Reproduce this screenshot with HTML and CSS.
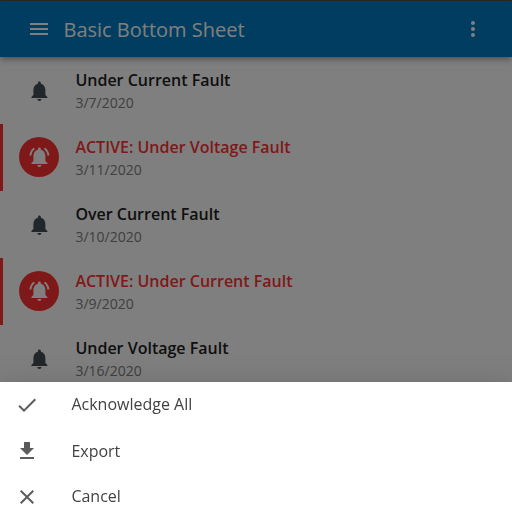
FILE: index.html
```
<!DOCTYPE html>
<html lang="en">
<head>
<meta charset="utf-8">
<title>Basic Bottom Sheet</title>
<link rel="stylesheet" href="styles.css">
</head>
<body>
<svg width="0" height="0" class="defs">
  <symbol id="bell" viewBox="0 0 24 24"><path d="M12 22c1.1 0 2-.9 2-2h-4c0 1.100.9 2 2 2zm6-6v-5c0-3.070-1.640-5.640-4.500-6.320V4c0-.83-.67-1.500-1.500-1.500s-1.500.67-1.500 1.500v.68C7.630 5.360 6 7.920 6 11v5l-2 2v1h16v-1l-2-2z"/></symbol>
  <symbol id="bell-active" viewBox="0 0 24 24"><path d="M7.580 4.080L6.150 2.650C3.750 4.480 2.170 7.300 2.030 10.500h2c.15-2.650 1.510-4.970 3.550-6.420zm12.390 6.420h2c-.15-3.200-1.730-6.020-4.120-7.850l-1.420 1.430c2.020 1.450 3.390 3.770 3.540 6.420zM18 11c0-3.070-1.640-5.640-4.500-6.320V4c0-.83-.67-1.500-1.500-1.500s-1.500.67-1.500 1.500v.68C7.630 5.360 6 7.920 6 11v5l-2 2v1h16v-1l-2-2v-5zm-6 11c.14 0 .27-.01.4-.04.65-.14 1.180-.58 1.440-1.180.1-.24.15-.5.15-.78h-4c.01 1.100.9 2 2.010 2z"/></symbol>
</svg>
<div class="app">
  <header class="bar">
    <svg class="icon" viewBox="0 0 24 24"><path d="M3 18h18v-2H3v2zm0-5h18v-2H3v2zm0-7v2h18V6H3z"/></svg>
    <h1 class="bar-title">Basic Bottom Sheet</h1>
    <svg class="icon" viewBox="0 0 24 24"><path d="M12 8c1.100 0 2-.9 2-2s-.9-2-2-2-2 .9-2 2 .9 2 2 2zm0 2c-1.100 0-2 .9-2 2s.9 2 2 2 2-.9 2-2-.9-2-2-2zm0 6c-1.100 0-2 .9-2 2s.9 2 2 2 2-.9 2-2-.9-2-2-2z"/></svg>
  </header>
  <main class="list">
    <div class="row"><span class="avatar"><svg class="icon"><use href="#bell"/></svg></span><div><div class="name">Under Current Fault</div><div class="date">3/7/2020</div></div></div>
    <div class="row active"><span class="avatar"><svg class="icon"><use href="#bell-active"/></svg></span><div><div class="name">ACTIVE: Under Voltage Fault</div><div class="date">3/11/2020</div></div></div>
    <div class="row"><span class="avatar"><svg class="icon"><use href="#bell"/></svg></span><div><div class="name">Over Current Fault</div><div class="date">3/10/2020</div></div></div>
    <div class="row active"><span class="avatar"><svg class="icon"><use href="#bell-active"/></svg></span><div><div class="name">ACTIVE: Under Current Fault</div><div class="date">3/9/2020</div></div></div>
    <div class="row"><span class="avatar"><svg class="icon"><use href="#bell"/></svg></span><div><div class="name">Under Voltage Fault</div><div class="date">3/16/2020</div></div></div>
  </main>
</div>
<div class="backdrop"></div>
<div class="sheet">
  <div class="action"><svg class="icon" viewBox="0 0 24 24"><path d="M9 16.170L4.830 12l-1.420 1.410L9 19 21 7l-1.410-1.410z"/></svg><span>Acknowledge All</span></div>
  <div class="action"><svg class="icon" viewBox="0 0 24 24"><path d="M19 9h-4V3H9v6H5l7 7 7-7zM5 18v2h14v-2H5z"/></svg><span>Export</span></div>
  <div class="action"><svg class="icon" viewBox="0 0 24 24"><path d="M19 6.410L17.590 5 12 10.590 6.410 5 5 6.410 10.590 12 5 17.590 6.410 19 12 13.410 17.590 19 19 17.590 13.410 12z"/></svg><span>Cancel</span></div>
</div>
</body>
</html>
```
FILE: styles.css
```
* { box-sizing: border-box; }
body {
  margin: 0;
  height: 516px;
  overflow: hidden;
  background: #fff;
  font-family: "Open Sans", sans-serif;
}
.defs { position: absolute; }
.icon {
  display: block;
  flex: none;
  width: 24px;
  height: 24px;
  fill: currentColor;
}
.app { border-top: 1px solid #555; }
.bar {
  position: relative;
  display: flex;
  align-items: center;
  height: 56px;
  padding: 0 27.300px;
  background: #007bc1;
  color: #fff;
  box-shadow: 0 2px 4px -1px rgba(0,0,0,.2), 0 4px 5px rgba(0,0,0,.14), 0 1px 10px rgba(0,0,0,.12);
}
.bar-title {
  flex: 1;
  margin: 2px 0 0 12.200px;
  font-size: 20px;
  font-weight: 400;
  line-height: 32px;
}
.row {
  display: flex;
  align-items: center;
  gap: 16px;
  height: 67px;
  padding-left: 19.400px;
  color: #424e54;
}
.avatar {
  display: grid;
  place-items: center;
  width: 40px;
  height: 40px;
  border-radius: 50%;
}
.avatar .icon { transform: translateX(.4px); }
.active {
  padding-left: 16.400px;
  border-left: 3px solid #ff3333;
}
.active .avatar {
  margin-bottom: 1px;
  background: #ff3333;
  color: #fff;
}
.name {
  color: #212121;
  font-size: 16px;
  font-weight: 600;
  line-height: 24px;
}
.active .name { color: #ff3333; }
.date {
  color: #808080;
  font-size: 14px;
  line-height: 22px;
}
.backdrop {
  position: fixed;
  inset: 0;
  background: rgba(0,0,0,.5);
}
.sheet {
  position: fixed;
  inset: auto 0 0;
  height: 134px;
  background: #fff;
  color: #5c5c5c;
  box-shadow: 0 8px 10px -5px rgba(0,0,0,.2), 0 16px 24px 2px rgba(0,0,0,.14), 0 6px 30px 5px rgba(0,0,0,.12);
}
.action {
  display: flex;
  align-items: center;
  gap: 32px;
  height: 46px;
  padding-left: 15.400px;
}
.action span {
  color: #424242;
  font-size: 16px;
  line-height: 24px;
  margin-bottom: 2px;
}
.action:nth-child(2) span { margin-bottom: 0; }
```
